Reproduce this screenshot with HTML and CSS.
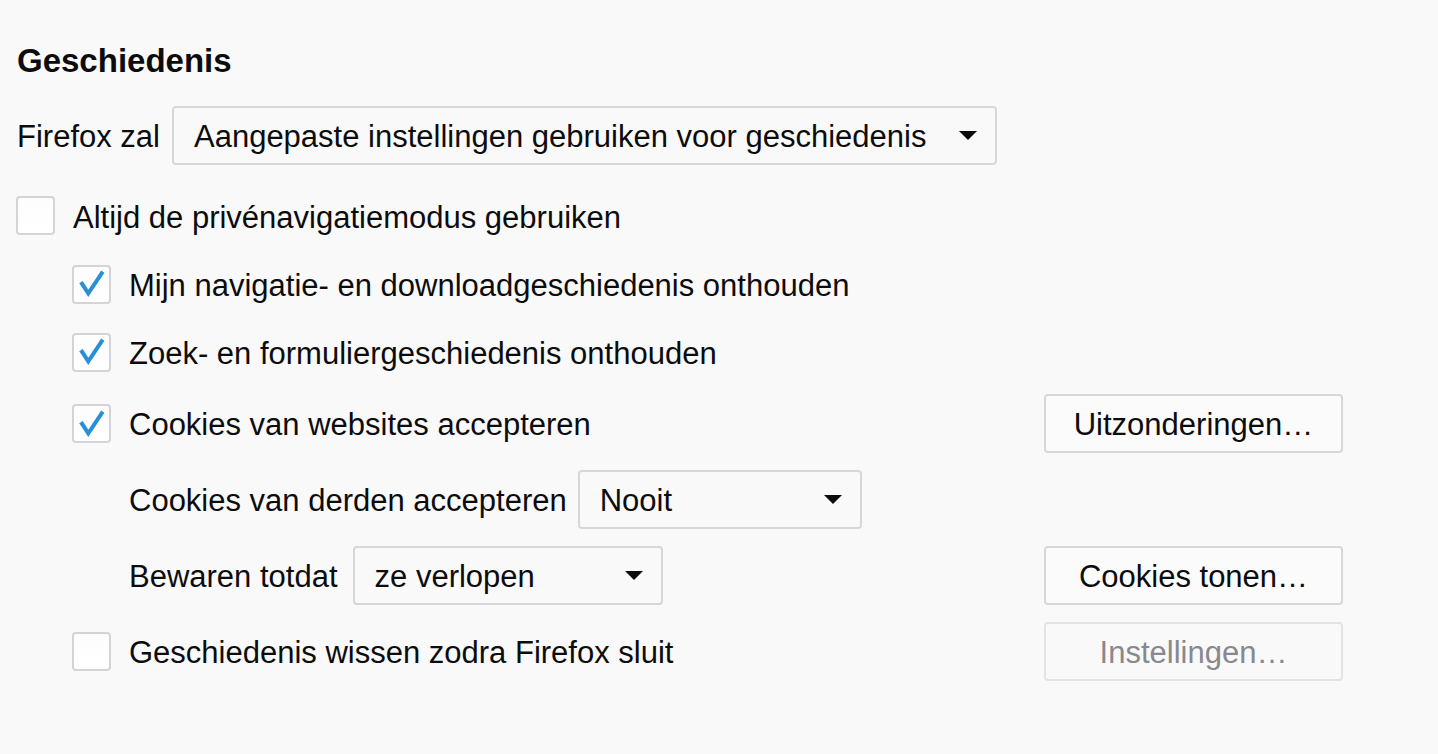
FILE: index.html
```html
<!DOCTYPE html>
<html lang="nl">
<head>
<meta charset="utf-8">
<title>Geschiedenis</title>
<link rel="stylesheet" href="styles.css">
</head>
<body>
<section class="pane">
  <h1 class="title">Geschiedenis</h1>

  <div class="row row-select">
    <span class="label">Firefox zal</span>
    <div class="select select-main">
      <span class="select-text">Aangepaste instellingen gebruiken voor geschiedenis</span>
      <span class="caret"></span>
    </div>
  </div>

  <div class="row row-check1">
    <span class="checkbox"></span>
    <span class="label">Altijd de privénavigatiemodus gebruiken</span>
  </div>

  <div class="indent">
    <div class="row row-check">
      <span class="checkbox checked"><svg viewBox="0 0 34 34" class="tick"><path d="M7 16.7 L13.3 26.3 L26.7 6.3"/></svg></span>
      <span class="label">Mijn navigatie- en downloadgeschiedenis onthouden</span>
    </div>

    <div class="row row-check">
      <span class="checkbox checked"><svg viewBox="0 0 34 34" class="tick"><path d="M7 16.7 L13.3 26.3 L26.7 6.3"/></svg></span>
      <span class="label">Zoek- en formuliergeschiedenis onthouden</span>
    </div>

    <div class="row row-button row-cookies">
      <div class="group">
        <span class="checkbox checked"><svg viewBox="0 0 34 34" class="tick"><path d="M7 16.7 L13.3 26.3 L26.7 6.3"/></svg></span>
        <span class="label">Cookies van websites accepteren</span>
      </div>
      <button class="btn">Uitzonderingen…</button>
    </div>

    <div class="row row-button sub">
      <div class="group sub-group">
        <span class="label">Cookies van derden accepteren</span>
        <div class="select select-third">
          <span class="select-text">Nooit</span>
          <span class="caret"></span>
        </div>
      </div>
    </div>

    <div class="row row-button sub">
      <div class="group sub-group sub-group-wide">
        <span class="label">Bewaren totdat</span>
        <div class="select select-keep">
          <span class="select-text">ze verlopen</span>
          <span class="caret"></span>
        </div>
      </div>
      <button class="btn">Cookies tonen…</button>
    </div>

    <div class="row row-button sub">
      <div class="group">
        <span class="checkbox"></span>
        <span class="label">Geschiedenis wissen zodra Firefox sluit</span>
      </div>
      <button class="btn" disabled>Instellingen…</button>
    </div>
  </div>
</section>
</body>
</html>
```

FILE: styles.css
```css
html, body {
  margin: 0;
  padding: 0;
  background: #f9f9fa;
}

body {
  font-family: "Liberation Sans", Arial, sans-serif;
  color: #0c0c0d;
  font-size: 31px;
}

.pane {
  width: 1327px;
  padding: 41px 0 0 16px;
  display: flex;
  flex-direction: column;
}

.title {
  margin: 0 0 0 1px;
  font-size: 33px;
  line-height: 40px;
  font-weight: 700;
  height: 40px;
}

.row {
  display: flex;
  align-items: center;
}

.label {
  white-space: nowrap;
  line-height: 36px;
  padding-top: 3px;
}

.row-select {
  height: 59px;
  margin-top: 25px;
  padding-left: 1px;
  gap: 12px;
}

.select {
  box-sizing: border-box;
  height: 59px;
  border: 2px solid #d7d7db;
  border-radius: 4px;
  background: #f9f9fa;
  display: flex;
  align-items: center;
  justify-content: space-between;
  padding: 0 18px 0 20px;
}

.select-text {
  white-space: nowrap;
  padding-top: 2px;
}

.caret {
  width: 0;
  height: 0;
  border-left: 9px solid transparent;
  border-right: 9px solid transparent;
  border-top: 9px solid #0c0c0d;
}

.select-main { width: 825px; }
.select-third { width: 284px; }
.select-keep { width: 310px; }

.checkbox {
  box-sizing: border-box;
  width: 39px;
  height: 39px;
  border: 2px solid #d4d4d8;
  border-radius: 4px;
  background: linear-gradient(#fdfdfd, #ffffff);
  display: flex;
  align-items: center;
  justify-content: center;
  flex: none;
}

.tick {
  width: 34px;
  height: 34px;
  fill: none;
  stroke: #2a90d6;
  stroke-width: 4;
  stroke-linecap: square;
  stroke-linejoin: miter;
}

.row-check1 {
  height: 40px;
  margin-top: 31px;
  gap: 18px;
}

.row-check1 .checkbox {
  margin-top: -1px;
}

.indent {
  display: flex;
  flex-direction: column;
  padding-left: 56px;
}

.row-check {
  height: 40px;
  margin-top: 28px;
  gap: 18px;
}

.row-button {
  height: 59px;
  justify-content: space-between;
}

.row-cookies {
  margin-top: 22px;
}

.sub {
  margin-top: 17px;
}

.group {
  display: flex;
  align-items: center;
  gap: 18px;
}

.sub-group {
  gap: 11px;
  padding-left: 57px;
}

.sub-group-wide {
  gap: 15px;
}

.btn {
  box-sizing: border-box;
  width: 299px;
  height: 59px;
  border: 2px solid #d7d7db;
  border-radius: 4px;
  background: #fbfbfb;
  font-family: "Liberation Sans", Arial, sans-serif;
  font-size: 31px;
  color: #0c0c0d;
  padding: 3px 0 0;
  margin: 0;
}

.btn:disabled {
  color: #88888d;
  border-color: #e3e3e6;
  background: #f9f9fa;
}
```
